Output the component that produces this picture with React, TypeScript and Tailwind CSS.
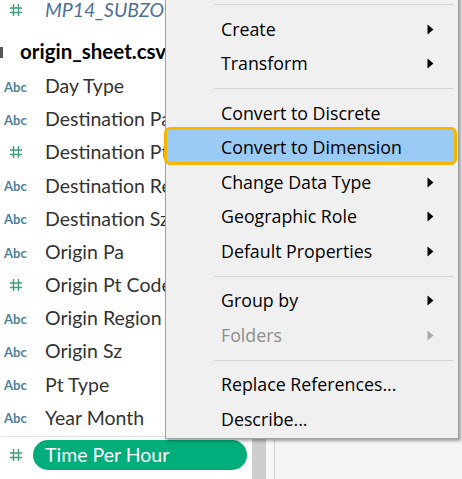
import React from "react";

type Field = { name: string; kind: "abc" | "num" };

const fields: Field[] = [
  { name: "Day Type", kind: "abc" },
  { name: "Destination Pa", kind: "abc" },
  { name: "Destination Pt Code", kind: "num" },
  { name: "Destination Region", kind: "abc" },
  { name: "Destination Sz", kind: "abc" },
  { name: "Origin Pa", kind: "abc" },
  { name: "Origin Pt Code", kind: "num" },
  { name: "Origin Region", kind: "abc" },
  { name: "Origin Sz", kind: "abc" },
  { name: "Pt Type", kind: "abc" },
  { name: "Year Month", kind: "abc" },
];

const listFont = { fontFamily: "Lato, 'Open Sans', sans-serif" };

const Hash = ({ color = "#3f9f78" }: { color?: string }) => (
  <svg width="14" height="14" viewBox="0 0 14 14" className="block">
    <path d="M4.5 1 V13 M9.5 1 V13 M1 5 H13 M1 9.5 H13" stroke={color} strokeWidth="1.4" fill="none" />
  </svg>
);

const TypeIcon = ({ kind }: { kind: Field["kind"] }) =>
  kind === "abc" ? (
    <span className="text-[13px] font-bold text-[#4d7f9c] leading-none pl-[4px] pt-[3px]">Abc</span>
  ) : (
    <span className="pl-[9px]">
      <Hash />
    </span>
  );

const Arrow = ({ color = "#000" }: { color?: string }) => (
  <svg width="7" height="11" viewBox="0 0 7 11" className="block">
    <path d="M0.5 0.5 L6.5 5.5 L0.5 10.5 Z" fill={color} />
  </svg>
);

type MenuEntry = { sep: true } | { label: string; sub?: boolean; disabled?: boolean; active?: boolean };

const menu: MenuEntry[] = [
  { sep: true },
  { label: "Create", sub: true },
  { label: "Transform", sub: true },
  { sep: true },
  { label: "Convert to Discrete" },
  { label: "Convert to Dimension", active: true },
  { label: "Change Data Type", sub: true },
  { label: "Geographic Role", sub: true },
  { label: "Default Properties", sub: true },
  { sep: true },
  { label: "Group by", sub: true },
  { label: "Folders", sub: true, disabled: true },
  { sep: true },
  { label: "Replace References..." },
  { label: "Describe..." },
];

const ContextMenu = () => (
  <div
    className="absolute left-[165px] top-[-4px] w-[294px] bg-[#f0f0f0] border border-[#a0a0a0] pb-[1px] shadow-[2px_2px_3px_rgba(0,0,0,0.35)]"
    style={{ fontFamily: "'Open Sans', 'Noto Sans', sans-serif" }}
  >
    {menu.map((m, i) =>
      "sep" in m ? (
        <div key={i} className="h-[15px] flex items-center pl-[48px] pr-[5px]">
          <div className="h-px w-full bg-[#d4d4d4]" />
        </div>
      ) : (
        <div key={i} className="relative h-[34.5px] flex items-center pl-[55px] pr-[24px]">
          {m.active && (
            <div className="absolute left-[-2px] right-[1px] top-[-4px] bottom-[0px] rounded-[6px] border-[3px] border-[#f7b500] bg-[#99cbf5]" />
          )}
          <span
            className={`relative flex-1 text-[17.8px] ${m.disabled ? "text-[#8e8e8e]" : "text-black"}`}
          >
            {m.label}
          </span>
          {m.sub && (
            <span className="relative">
              <Arrow color={m.disabled ? "#a8a8a8" : "#000"} />
            </span>
          )}
        </div>
      )
    )}
  </div>
);

export default function App() {
  return (
    <div className="relative w-[462px] h-[479px] overflow-hidden flex bg-[#f5f5f5]">
      <div className="w-[252px] h-full bg-white flex flex-col" style={listFont}>
        <div className="h-[34px] mt-[-7px] flex items-center shrink-0">
          <span className="w-[40px] pl-[9px]">
            <Hash />
          </span>
          <span className="ml-[5px] text-[19.5px] italic text-[#4d6f9a] whitespace-nowrap">MP14_SUBZONE</span>
        </div>
        <div className="h-[42px] flex items-center shrink-0 relative pt-[6px]">
          <div className="absolute left-0 top-[20px] w-[3px] h-[11px] bg-[#555]" />
          <span className="pl-[20px] text-[20.5px] font-bold text-black whitespace-nowrap">origin_sheet.csv</span>
        </div>
        {fields.map((f) => (
          <div key={f.name} className="h-[33.2px] flex items-center shrink-0">
            <span className="w-[40px] flex items-center">
              <TypeIcon kind={f.kind} />
            </span>
            <span className="ml-[5px] text-[19.5px] text-[#333] whitespace-nowrap">{f.name}</span>
          </div>
        ))}
        <div className="h-px bg-[#e2e2e2] mt-[1.5px] shrink-0" />
        <div className="flex items-center mt-[3px] h-[30px] shrink-0">
          <span className="w-[33px] pl-[9px]">
            <Hash />
          </span>
          <div className="w-[214px] h-[30px] rounded-full bg-[#00ad7b] flex items-center pl-[12px] text-[19.5px] text-white">
            Time Per Hour
          </div>
        </div>
      </div>
      <div className="w-[14px] h-full bg-[#cdcdcd]" />
      <div className="w-[9px] h-full bg-[#f7f7f7] border-r border-[#cfcfcf]" />
      <div className="flex-1 h-full bg-[#f5f5f5]" />
      <ContextMenu />
    </div>
  );
}
